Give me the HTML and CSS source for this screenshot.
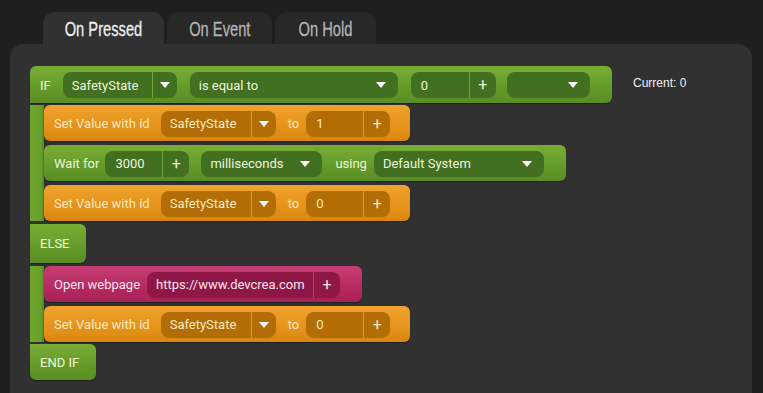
FILE: index.html
```html
<!DOCTYPE html>
<html>
<head>
<meta charset="utf-8">
<link rel="stylesheet" href="styles.css">
</head>
<body>
<div class="tabs">
  <div class="tab active"><span class="tabtxt">On Pressed</span></div>
  <div class="tab tab-event"><span class="tabtxt">On Event</span></div>
  <div class="tab tab-hold"><span class="tabtxt">On Hold</span></div>
</div>
<div class="panel">
  <div class="program">
    <div class="if">
      <div class="blk green head">
        <span class="lbl lbl-if">IF</span>
        <span class="pill g w-var1 ml12"><span class="ptxt">SafetyState</span><span class="sep"></span><span class="arr"><svg width="10" height="6" viewBox="0 0 10 6"><path d="M0 0H10L5 6Z" fill="#fff"/></svg></span></span>
        <span class="pill g w-cmp ml13"><span class="ptxt">is equal to</span><span class="arr end"><svg width="10" height="6" viewBox="0 0 10 6"><path d="M0 0H10L5 6Z" fill="#fff"/></svg></span></span>
        <span class="pill g w-num ml13"><span class="ptxt num">0</span><span class="sep"></span><span class="plus">+</span></span>
        <span class="pill g w-empty ml11"><span class="ptxt"></span><span class="arr end"><svg width="10" height="6" viewBox="0 0 10 6"><path d="M0 0H10L5 6Z" fill="#fff"/></svg></span></span>
      </div>
      <div class="branch b1">
        <div class="rail"></div>
        <div class="stack">
          <div class="blk orange w-set">
            <span class="lbl">Set Value with id</span>
            <span class="pill o w-var2 ml11"><span class="ptxt">SafetyState</span><span class="sep"></span><span class="arr"><svg width="10" height="6" viewBox="0 0 10 6"><path d="M0 0H10L5 6Z" fill="#fff"/></svg></span></span>
            <span class="lbl ml12">to</span>
            <span class="pill o w-num2 ml7"><span class="ptxt num">1</span><span class="sep"></span><span class="plus">+</span></span>
          </div>
          <div class="blk green w-wait">
            <span class="lbl">Wait for</span>
            <span class="pill g w-num2 ml6"><span class="ptxt num">3000</span><span class="sep"></span><span class="plus">+</span></span>
            <span class="pill g w-ms ml12"><span class="ptxt">milliseconds</span><span class="arr end"><svg width="10" height="6" viewBox="0 0 10 6"><path d="M0 0H10L5 6Z" fill="#fff"/></svg></span></span>
            <span class="lbl ml13">using</span>
            <span class="pill g w-sys ml7"><span class="ptxt">Default System</span><span class="arr end"><svg width="10" height="6" viewBox="0 0 10 6"><path d="M0 0H10L5 6Z" fill="#fff"/></svg></span></span>
          </div>
          <div class="blk orange w-set">
            <span class="lbl">Set Value with id</span>
            <span class="pill o w-var2 ml11"><span class="ptxt">SafetyState</span><span class="sep"></span><span class="arr"><svg width="10" height="6" viewBox="0 0 10 6"><path d="M0 0H10L5 6Z" fill="#fff"/></svg></span></span>
            <span class="lbl ml12">to</span>
            <span class="pill o w-num2 ml7"><span class="ptxt num">0</span><span class="sep"></span><span class="plus">+</span></span>
          </div>
        </div>
      </div>
      <div class="blk green tag else"><span class="lbl">ELSE</span></div>
      <div class="branch b2">
        <div class="rail"></div>
        <div class="stack">
          <div class="blk pink w-web">
            <span class="lbl">Open webpage</span>
            <span class="pill p w-url ml7"><span class="ptxt">https://www.devcrea.com</span><span class="sep"></span><span class="plus">+</span></span>
          </div>
          <div class="blk orange w-set">
            <span class="lbl">Set Value with id</span>
            <span class="pill o w-var2 ml11"><span class="ptxt">SafetyState</span><span class="sep"></span><span class="arr"><svg width="10" height="6" viewBox="0 0 10 6"><path d="M0 0H10L5 6Z" fill="#fff"/></svg></span></span>
            <span class="lbl ml12">to</span>
            <span class="pill o w-num2 ml7"><span class="ptxt num">0</span><span class="sep"></span><span class="plus">+</span></span>
          </div>
        </div>
      </div>
      <div class="blk green tag endif"><span class="lbl">END IF</span></div>
    </div>
    <div class="current">Current: 0</div>
  </div>
</div>
</body>
</html>
```

FILE: styles.css
```css
* { box-sizing: border-box; }
html, body { margin: 0; padding: 0; }
body {
  background: #1f1f1f;
  width: 763px;
  height: 393px;
  overflow: hidden;
  font-family: Roboto, "Liberation Sans", sans-serif;
}
.tabs {
  display: flex;
  padding: 12px 0 0 43px;
  gap: 3px;
  height: 44px;
}
.tab {
  width: 121px;
  height: 32px;
  border-radius: 12px 12px 0 0;
  background: #282828;
  color: #b4b4b4;
  font-family: "Liberation Sans", Arial, sans-serif;
  font-size: 21px;
  display: flex;
  align-items: center;
  justify-content: center;
  padding-top: 1px;
}
.tabtxt {
  display: inline-block;
  transform: scaleX(0.7);
  white-space: nowrap;
  -webkit-text-stroke: 0.3px currentColor;
}
.tab.active { background: #313131; color: #efefef; }
.tab-event { width: 105px; }
.tab-hold { width: 101px; }
.panel {
  margin-left: 10px;
  width: 742px;
  height: 360px;
  background: #313131;
  border-radius: 14px 14px 0 0;
  padding: 22px 0 0 20px;
}
.program { display: flex; align-items: flex-start; }
.if { display: flex; flex-direction: column; }
.current {
  font-family: "Liberation Sans", Arial, sans-serif;
  font-size: 12px;
  color: #ededed;
  margin: 10px 0 0 21px;
}
.blk {
  display: flex;
  align-items: center;
  height: 36px;
  border-radius: 6px;
  padding-left: 10px;
  font-size: 13px;
  box-shadow: 0 1px 1px rgba(0,0,0,0.35);
}
.green {
  background: linear-gradient(#78ad34, #649a2a 60%, #5a8d24);
  color: #eaf6dc;
}
.orange {
  background: linear-gradient(#f0a22c, #e5931b 60%, #d9860f);
  color: #fce8c2;
}
.pink {
  background: linear-gradient(#c63f74, #b52a61 60%, #a62156);
  color: #f8e2ec;
}
.head { width: 582px; height: 37px; border-radius: 6px 6px 6px 0; padding-top: 1px; }
.lbl { white-space: nowrap; }
.branch { display: flex; }
.b1 { padding: 2px 0 3px; }
.b2 { padding: 3px 0 2px; }
.rail {
  width: 14px;
  background: linear-gradient(90deg, #6ea52f, #68a02c 80%, #4f7f20);
}
.stack { display: flex; flex-direction: column; gap: 4px; }
.stack .blk { padding-top: 1px; }
.else { width: 56px; height: 39px; border-radius: 0 6px 6px 0; color: #eefad6; }
.endif { width: 66px; height: 36px; border-radius: 0 6px 6px 6px; color: #eefad6; }
.w-set { width: 366px; }
.w-wait { width: 522px; }
.w-web { width: 318px; }
.pill {
  display: flex;
  align-items: center;
  height: 26px;
  border-radius: 8px;
  flex: none;
}
.pill.g { background: #426f20; }
.pill.o { background: #b36d05; }
.pill.p { background: #8f1746; }
.ptxt { flex: 1; padding-left: 9px; white-space: nowrap; }
.ptxt.num { padding-left: 10px; }
.sep { width: 1px; align-self: stretch; }
.g .sep { background: #74a63d; }
.o .sep { background: #e09a2c; }
.p .sep { background: #b9416f; }
.arr { width: 24px; display: flex; justify-content: center; align-items: center; }
.arr.end { width: 25px; justify-content: flex-start; padding-left: 3px; }
.plus { width: 26px; text-align: center; font-size: 16px; line-height: 26px; }
.w-var1 { width: 114px; }
.w-var2 { width: 115px; }
.w-cmp { width: 208px; }
.w-num { width: 85px; }
.w-num2 { width: 84px; }
.w-empty { width: 83px; }
.w-ms { width: 121px; }
.w-sys { width: 170px; }
.w-url { width: 193px; }
.ml6 { margin-left: 6px; }
.ml7 { margin-left: 7px; }
.ml11 { margin-left: 11px; }
.ml12 { margin-left: 12px; }
.ml13 { margin-left: 13px; }
```
